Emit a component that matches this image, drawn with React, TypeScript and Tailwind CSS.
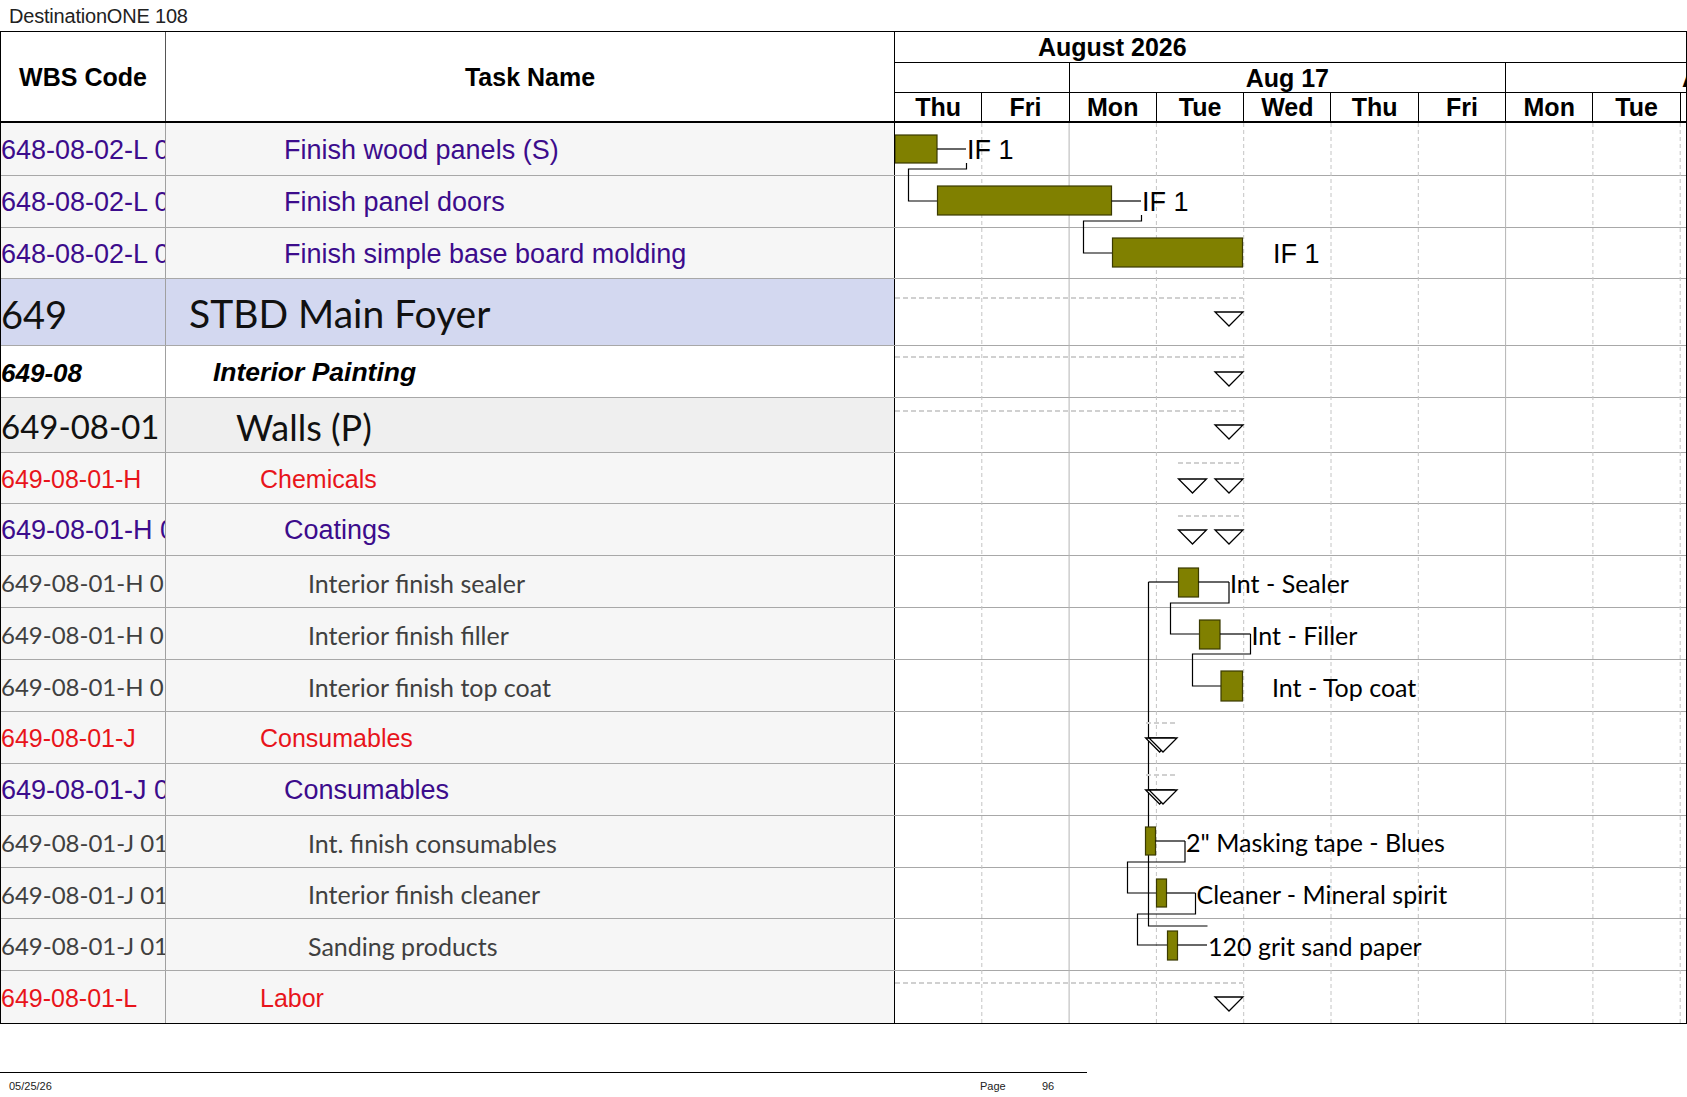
import React from "react";

type Row = {
  h: string;
  bg: string;
  wbs: string;
  wbsCls: string;
  task: string;
  taskCls: string;
};

const ARIAL = "font-['Liberation_Sans',Arial,sans-serif]";
const CAL = "font-['Lato','Liberation_Sans',sans-serif]";

const purple = `${ARIAL} text-[27px] text-[#3c0c8c] pt-[2px]`;
const red = `${ARIAL} text-[25px] text-[#e8141b] pt-[2px]`;
const grey = `${CAL} text-[25px] text-[#404040] pt-[3px]`;
const greyW = `${CAL} text-[24px] text-[#404040] pt-[3px]`;

const rows: Row[] = [
  { h: "h-[53px]", bg: "bg-[#f6f6f6]", wbs: "648-08-02-L 01", wbsCls: purple, task: "Finish wood panels (S)", taskCls: `${purple} pl-[118px]` },
  { h: "h-[52px]", bg: "bg-[#f6f6f6]", wbs: "648-08-02-L 01", wbsCls: purple, task: "Finish panel doors", taskCls: `${purple} pl-[118px]` },
  { h: "h-[51px]", bg: "bg-[#f6f6f6]", wbs: "648-08-02-L 01", wbsCls: purple, task: "Finish simple base board molding", taskCls: `${purple} pl-[118px]` },
  { h: "h-[67px]", bg: "bg-[#d3d8f0]", wbs: "649", wbsCls: `${CAL} text-[38px] text-[#111] pt-[3px]`, task: "STBD Main Foyer", taskCls: `${CAL} text-[39px] text-[#111] pl-[23px] pt-[3px]` },
  { h: "h-[52px]", bg: "bg-white", wbs: "649-08", wbsCls: `${ARIAL} text-[26px] font-bold italic text-black pt-[2px]`, task: "Interior Painting", taskCls: `${ARIAL} text-[26.5px] font-bold italic text-black pl-[47px] pt-[2px]` },
  { h: "h-[55px]", bg: "bg-[#efefef]", wbs: "649-08-01", wbsCls: `${CAL} text-[33px] text-[#111] pt-[3px]`, task: "Walls (P)", taskCls: `${CAL} text-[36px] text-[#111] pl-[70px] pt-[3px]` },
  { h: "h-[51px]", bg: "bg-[#f6f6f6]", wbs: "649-08-01-H", wbsCls: red, task: "Chemicals", taskCls: `${red} pl-[94px]` },
  { h: "h-[52px]", bg: "bg-[#f6f6f6]", wbs: "649-08-01-H 01", wbsCls: purple, task: "Coatings", taskCls: `${purple} pl-[118px]` },
  { h: "h-[52px]", bg: "bg-[#f6f6f6]", wbs: "649-08-01-H 01", wbsCls: greyW, task: "Interior finish sealer", taskCls: `${grey} pl-[142px]` },
  { h: "h-[52px]", bg: "bg-[#f6f6f6]", wbs: "649-08-01-H 01", wbsCls: greyW, task: "Interior finish filler", taskCls: `${grey} pl-[142px]` },
  { h: "h-[52px]", bg: "bg-[#f6f6f6]", wbs: "649-08-01-H 01", wbsCls: greyW, task: "Interior finish top coat", taskCls: `${grey} pl-[142px]` },
  { h: "h-[52px]", bg: "bg-[#f6f6f6]", wbs: "649-08-01-J", wbsCls: red, task: "Consumables", taskCls: `${red} pl-[94px]` },
  { h: "h-[52px]", bg: "bg-[#f6f6f6]", wbs: "649-08-01-J 01", wbsCls: purple, task: "Consumables", taskCls: `${purple} pl-[118px]` },
  { h: "h-[52px]", bg: "bg-[#f6f6f6]", wbs: "649-08-01-J 01", wbsCls: greyW, task: "Int. finish consumables", taskCls: `${grey} pl-[142px]` },
  { h: "h-[51px]", bg: "bg-[#f6f6f6]", wbs: "649-08-01-J 01", wbsCls: greyW, task: "Interior finish cleaner", taskCls: `${grey} pl-[142px]` },
  { h: "h-[52px]", bg: "bg-[#f6f6f6]", wbs: "649-08-01-J 01", wbsCls: greyW, task: "Sanding products", taskCls: `${grey} pl-[142px]` },
  { h: "h-[52px]", bg: "bg-[#f6f6f6]", wbs: "649-08-01-L", wbsCls: red, task: "Labor", taskCls: `${red} pl-[94px]` },
];

const days = ["Thu", "Fri", "Mon", "Tue", "Wed", "Thu", "Fri", "Mon", "Tue"];

const OLIVE = "#808000";
const BARSTROKE = "#3a3a00";

function Tri({ x, y }: { x: number; y: number }) {
  return (
    <polygon
      points={`${x},${y} ${x + 28},${y} ${x + 14},${y + 14}`}
      fill="white"
      stroke="black"
      strokeWidth={1.3}
    />
  );
}

function Bar({ x, y, w, h }: { x: number; y: number; w: number; h: number }) {
  return <rect x={x} y={y} width={w} height={h} fill={OLIVE} stroke={BARSTROKE} strokeWidth={1.2} />;
}

function Dash({ x1, x2, y }: { x1: number; x2: number; y: number }) {
  return <line x1={x1} x2={x2} y1={y} y2={y} stroke="#d0d0d0" strokeWidth={2} strokeDasharray="5 3" />;
}

function Path({ d }: { d: string }) {
  return <path d={d} fill="none" stroke="black" strokeWidth={1.2} />;
}

const arialText = { fontFamily: "'Liberation Sans', Arial, sans-serif", fontSize: 27 };
const calText = { fontFamily: "'Lato', 'Liberation Sans', sans-serif", fontSize: 25 };

function Chart() {
  const verts = [1, 2, 3, 4, 5, 6, 7, 8, 9];
  return (
    <svg width={791} height={900} viewBox="0 0 791 900" className="absolute left-[894px] top-0 pointer-events-none">
      {verts.map((k) => {
        const x = 87.3 * k - 0.5;
        const solid = k === 2 || k === 7;
        return (
          <line
            key={k}
            x1={x}
            x2={x}
            y1={0}
            y2={900}
            stroke={solid ? "#b4b4b4" : "#c4c4c4"}
            strokeWidth={1}
            strokeDasharray={solid ? undefined : "4 3"}
          />
        );
      })}

      {/* rows 1-3 */}
      <Bar x={0} y={12} w={42} h={28} />
      <Path d="M42 26 H71" />
      <text x={72} y={36} {...arialText}>IF 1</text>
      <Path d="M71.5 40 V46 H13.5 V78 H42.5" />

      <Bar x={42.5} y={63} w={174} h={29} />
      <Path d="M216.5 78 H246" />
      <text x={247} y={88} {...arialText}>IF 1</text>
      <Path d="M246.5 92 V98 H188.5 V130 H217.5" />

      <Bar x={217.5} y={115} w={130} h={29} />
      <text x={378} y={140} {...arialText}>IF 1</text>

      {/* summaries */}
      <Dash x1={0} x2={348} y={175} />
      <Tri x={320} y={189} />
      <Dash x1={0} x2={348} y={234} />
      <Tri x={320} y={249} />
      <Dash x1={0} x2={348} y={288} />
      <Tri x={320} y={302} />

      <Dash x1={283} x2={348} y={340} />
      <Tri x={283.5} y={356} />
      <Tri x={320} y={356} />
      <Dash x1={283} x2={348} y={393} />
      <Tri x={283.5} y={407} />
      <Tri x={320} y={407} />

      {/* coatings */}
      <Path d="M253.5 459 H283.5" />
      <Path d="M253.5 459 V803 H312.5" />
      <Bar x={283.5} y={445} w={20} h={29} />
      <Path d="M303.5 459 H334" />
      <text x={335} y={470} {...calText}>Int - Sealer</text>
      <Path d="M334 459 V480 H275.5 V511 H304.5" />

      <Bar x={304.5} y={497} w={20.5} h={29} />
      <Path d="M325 511 H355.5" />
      <text x={356.5} y={522} {...calText}>Int - Filler</text>
      <Path d="M355.5 511 V531 H297.5 V563 H326" />

      <Bar x={326} y={548} w={21.5} h={30} />
      <text x={377} y={574} {...calText}>Int - Top coat</text>

      {/* consumables */}
      <Dash x1={251} x2={282} y={600} />
      <Tri x={250.6} y={615} />
      <Tri x={254} y={615} />
      <Dash x1={251} x2={282} y={652} />
      <Tri x={250.6} y={667} />
      <Tri x={254} y={667} />

      <Bar x={250.5} y={704} w={10} h={28} />
      <Path d="M260.5 718 H290" />
      <text x={291} y={729} {...calText}>2" Masking tape - Blues</text>
      <Path d="M290 718 V739 H232.5 V770 H261.5" />

      <Bar x={261.5} y={756} w={10} h={28} />
      <Path d="M271.5 770 H300.5" />
      <text x={301.5} y={781} {...calText}>Cleaner - Mineral spirit</text>
      <Path d="M300.5 770 V791 H242.5 V822 H272.5" />

      <Bar x={272.5} y={808} w={10} h={29} />
      <Path d="M282.5 822 H312" />
      <text x={313} y={833} {...calText}>120 grit sand paper</text>

      {/* labor */}
      <Dash x1={0} x2={348} y={860} />
      <Tri x={320} y={874} />
    </svg>
  );
}

export default function App() {
  return (
    <div className="w-[1687px] h-[1097px] bg-white relative overflow-hidden">
      <div className="h-[31px] flex items-center pl-[9px] font-['Liberation_Sans',Arial,sans-serif] text-[20px] text-[#222] tracking-[-0.2px]">
        DestinationONE 108
      </div>

      <div className="border border-black w-[1687px]">
        {/* header */}
        <div className="flex h-[91px] border-b-2 border-black font-['Liberation_Sans',Arial,sans-serif] font-bold text-[25px] text-black">
          <div className="w-[165px] shrink-0 border-r border-[#555] flex items-center justify-center pt-[3px]">WBS Code</div>
          <div className="w-[729px] shrink-0 border-r border-black flex items-center justify-center pt-[3px]">Task Name</div>
          <div className="w-[791px] shrink-0 flex flex-col">
            <div className="h-[31px] border-b border-black flex items-center pl-[143px] leading-none pt-[1px]">August 2026</div>
            <div className="h-[30px] border-b border-black flex">
              <div className="w-[174.6px] shrink-0 border-r border-black"></div>
              <div className="w-[436.5px] shrink-0 border-r border-black flex items-center justify-center leading-none pt-[1px]">Aug 17</div>
              <div className="flex-1 overflow-hidden whitespace-nowrap flex items-center pl-[176px] leading-none pt-[1px]">Aug 24</div>
            </div>
            <div className="h-[28px] flex">
              {days.map((d, i) => (
                <div key={i} className="w-[87.3px] shrink-0 border-r border-black flex items-center justify-center leading-none pt-[1px]">
                  {d}
                </div>
              ))}
              <div className="flex-1"></div>
            </div>
          </div>
        </div>

        {/* body */}
        <div className="relative">
          {rows.map((r, i) => (
            <div
              key={i}
              className={`flex ${r.h} ${i === rows.length - 1 ? "" : "border-b border-[#a8a8a8]"}`}
            >
              <div className={`w-[165px] shrink-0 border-r border-[#a0a0a0] ${r.bg} flex items-center overflow-hidden whitespace-nowrap`}>
                <span className={`${r.wbsCls} leading-none`}>{r.wbs}</span>
              </div>
              <div className={`w-[729px] shrink-0 border-r border-black ${r.bg} flex items-center overflow-hidden whitespace-nowrap`}>
                <span className={`${r.taskCls} leading-none`}>{r.task}</span>
              </div>
              <div className="flex-1 bg-white"></div>
            </div>
          ))}
          <Chart />
        </div>
      </div>

      <div className="absolute left-0 top-[1072px] w-[1087px] border-t border-black"></div>
      <div className="absolute left-0 top-[1079px] w-[1087px] h-[14px] flex items-center font-['Liberation_Sans',Arial,sans-serif] text-[11px] text-[#222]">
        <span className="pl-[9px] w-[980px] shrink-0">05/25/26</span>
        <span className="w-[62px] shrink-0">Page</span>
        <span>96</span>
      </div>
    </div>
  );
}
